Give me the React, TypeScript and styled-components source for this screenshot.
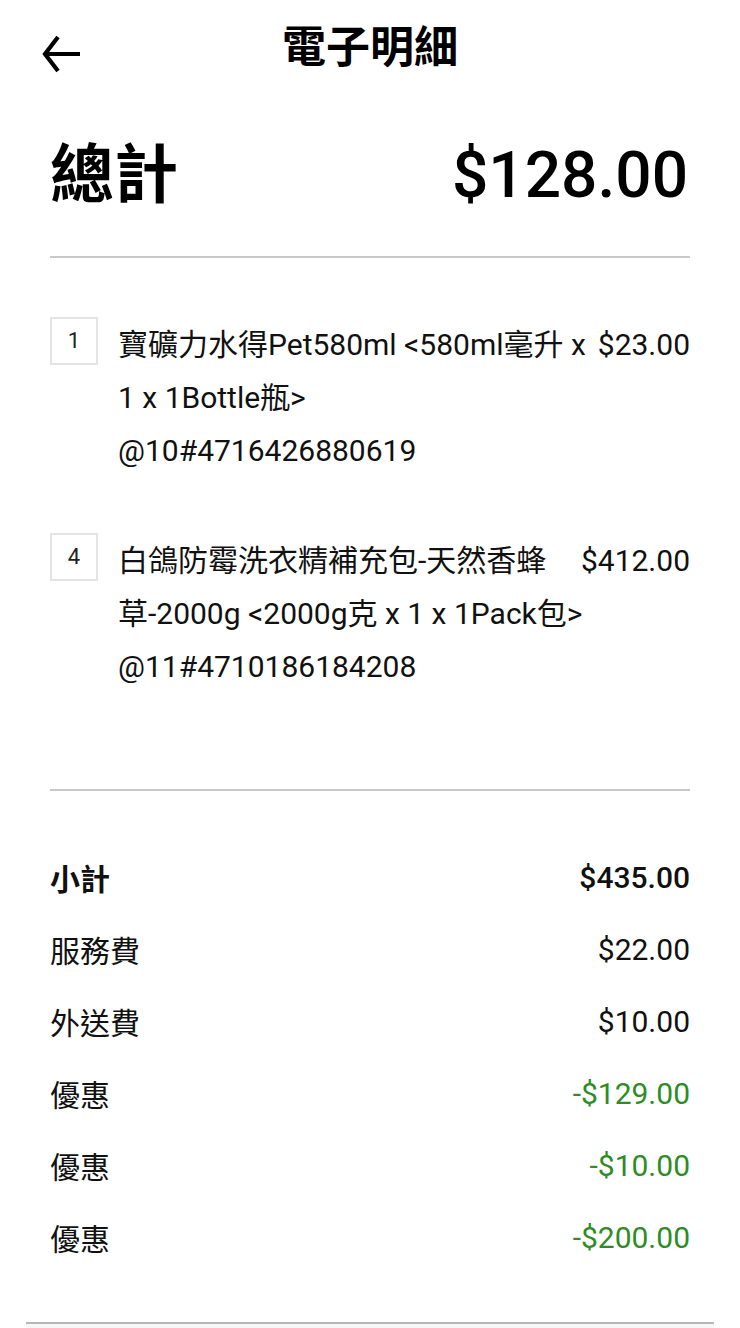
import { FC } from "react";
import styled, { createGlobalStyle } from "styled-components";

const FONT = `Roboto, "Noto Sans CJK TC", "Noto Sans", sans-serif`;
const GREEN = "#2e8c24";
const LINE = "#c9c9c9";

const GlobalStyle = createGlobalStyle`
  html, body {
    margin: 0;
    padding: 0;
    background: #ffffff;
  }
  body {
    font-family: ${FONT};
    color: #000;
  }
`;

const Page = styled.div`
  min-height: 100vh;
  display: flex;
  flex-direction: column;
  box-sizing: border-box;
`;

const Content = styled.div`
  padding: 0 50px;
`;

const Header = styled.header`
  height: 96px;
  display: grid;
  grid-template-columns: 1fr auto 1fr;
  align-items: start;
`;

const BackButton = styled.button`
  justify-self: start;
  margin: 34px 0 0 -10px;
  padding: 0;
  border: 0;
  background: none;
  width: 42px;
  height: 40px;
  display: flex;
  align-items: center;
  justify-content: center;
`;

const Title = styled.h1`
  margin: 22px 0 0;
  font-size: 44px;
  line-height: 52px;
  font-weight: 700;
  letter-spacing: 0;
`;

const TotalRow = styled.div`
  display: flex;
  justify-content: space-between;
  align-items: center;
  padding: 40px 0;
  font-size: 64px;
  line-height: 80px;
`;

const TotalLabel = styled.span`
  font-weight: 700;
`;

const TotalAmount = styled.span`
  font-weight: 500;
  margin-right: 2px;
`;

const Divider = styled.hr`
  margin: 0;
  border: 0;
  border-top: 2px solid ${LINE};
`;

const ItemList = styled.div`
  padding: 60px 0 96px;
  display: flex;
  flex-direction: column;
  gap: 57px;
`;

const ItemRow = styled.div`
  display: flex;
  align-items: flex-start;
  gap: 20px;
  font-size: 30px;
  line-height: 53px;
`;

const QtyBox = styled.div`
  flex-shrink: 0;
  width: 48px;
  height: 48px;
  box-sizing: border-box;
  margin-top: -1px;
  border: 2px solid #e4e4e4;
  display: flex;
  align-items: center;
  justify-content: center;
  font-size: 22px;
  line-height: 1;
  color: #222;
`;

const ItemText = styled.div`
  flex: 1;
  min-width: 0;
  color: #111;
`;

/* price sits on the first line only; the rest of the text runs under it */
const ItemPrice = styled.span`
  float: right;
  margin-left: 6px;
  white-space: nowrap;
  color: #111;
`;

const Summary = styled.div`
  padding: 50px 0 0;
`;

const SummaryRow = styled.div<{ $strong?: boolean; $discount?: boolean }>`
  display: flex;
  justify-content: space-between;
  align-items: center;
  height: 72px;
  font-size: 30px;
  color: #111;

  & > span:first-child {
    font-weight: ${(p) => (p.$strong ? 700 : 400)};
  }

  & > span:last-child {
    font-weight: ${(p) => (p.$strong ? 500 : 400)};
    color: ${(p) => (p.$discount ? GREEN : "#111")};
  }
`;

const Footer = styled.div`
  margin: auto 26px 0;
  height: 4px;
  border-top: 2px solid #b8b8b8;
  background: #f7f7f7;
  box-shadow: 0 -30px 40px rgba(0, 0, 0, 0.025);
`;

const BackArrow: FC = () => (
  <svg width="42" height="40" viewBox="0 0 42 40" fill="none">
    <path d="M40 20H5" stroke="#000" strokeWidth="4.2" />
    <path d="M18 3L5 20L18 37" stroke="#000" strokeWidth="4.2" strokeLinejoin="miter" />
  </svg>
);

const items = [
  {
    qty: 1,
    text: "寶礦力水得Pet580ml <580ml毫升 x 1 x 1Bottle瓶>",
    code: "@10#4716426880619",
    price: "$23.00",
  },
  {
    qty: 4,
    text: "白鴿防霉洗衣精補充包-天然香蜂草-2000g <2000g克 x 1 x 1Pack包>",
    code: "@11#4710186184208",
    price: "$412.00",
  },
];

const fees = [
  { label: "小計", value: "$435.00", strong: true },
  { label: "服務費", value: "$22.00" },
  { label: "外送費", value: "$10.00" },
  { label: "優惠", value: "-$129.00", discount: true },
  { label: "優惠", value: "-$10.00", discount: true },
  { label: "優惠", value: "-$200.00", discount: true },
];

export default function App() {
  return (
    <Page>
      <GlobalStyle />
      <Content>
        <Header>
          <BackButton aria-label="back">
            <BackArrow />
          </BackButton>
          <Title>電子明細</Title>
        </Header>

        <TotalRow>
          <TotalLabel>總計</TotalLabel>
          <TotalAmount>$128.00</TotalAmount>
        </TotalRow>
        <Divider />

        <ItemList>
          {items.map((item) => (
            <ItemRow key={item.code}>
              <QtyBox>{item.qty}</QtyBox>
              <ItemText>
                <ItemPrice>{item.price}</ItemPrice>
                <div>{item.text}</div>
                <div>{item.code}</div>
              </ItemText>
            </ItemRow>
          ))}
        </ItemList>
        <Divider />

        <Summary>
          {fees.map((f, i) => (
            <SummaryRow key={i} $strong={f.strong} $discount={f.discount}>
              <span>{f.label}</span>
              <span>{f.value}</span>
            </SummaryRow>
          ))}
        </Summary>
      </Content>
      <Footer />
    </Page>
  );
}
